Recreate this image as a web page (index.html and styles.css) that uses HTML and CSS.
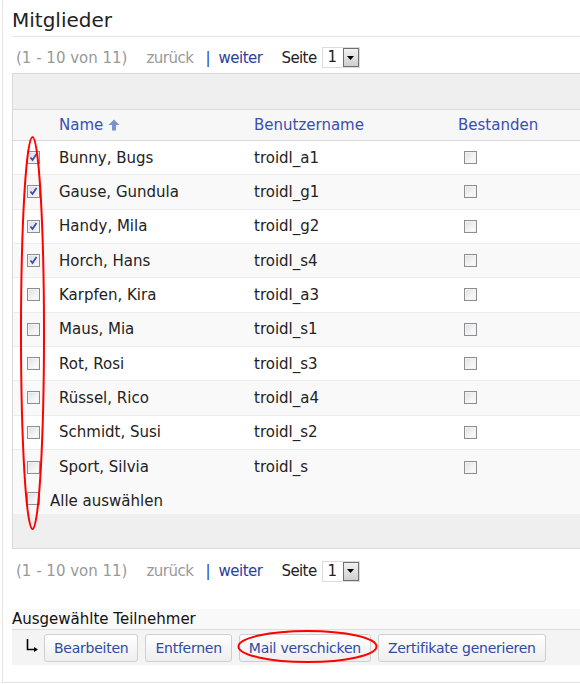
FILE: index.html
```html
<!DOCTYPE html>
<html lang="de">
<head>
<meta charset="utf-8">
<title>Mitglieder</title>
<link rel="stylesheet" href="styles.css">
</head>
<body>
<div class="panel">
  <h1 class="title">Mitglieder</h1>

  <div class="pager">
    <span class="range">(1 - 10 von 11)</span>
    <span class="prev">zurück</span>
    <span class="sep">|</span>
    <a class="next" href="#">weiter</a>
    <span class="page-label">Seite</span>
    <span class="select"><span class="select-val">1</span><span class="select-btn"><svg width="7" height="4" viewBox="0 0 7 4"><path d="M0 0h7L3.5 4z" fill="#000"/></svg></span></span>
  </div>

  <div class="grid">
    <div class="grid-top"></div>
    <div class="row head">
      <div class="c-check"></div>
      <div class="c-name">Name <svg class="sort" width="12" height="12" viewBox="0 0 12 12"><path d="M6 0.5L11.5 6H8v5.5H4V6H0.5z" fill="#7d92cc"/></svg></div>
      <div class="c-user">Benutzername</div>
      <div class="c-head-pass">Bestanden</div>
    </div>

    <div class="row"><div class="c-check"><span class="cb on"></span></div><div class="c-name">Bunny, Bugs</div><div class="c-user">troidl_a1</div><div class="c-pass"><span class="cb"></span></div></div>
    <div class="row alt"><div class="c-check"><span class="cb on"></span></div><div class="c-name">Gause, Gundula</div><div class="c-user">troidl_g1</div><div class="c-pass"><span class="cb"></span></div></div>
    <div class="row"><div class="c-check"><span class="cb on"></span></div><div class="c-name">Handy, Mila</div><div class="c-user">troidl_g2</div><div class="c-pass"><span class="cb"></span></div></div>
    <div class="row alt"><div class="c-check"><span class="cb on"></span></div><div class="c-name">Horch, Hans</div><div class="c-user">troidl_s4</div><div class="c-pass"><span class="cb"></span></div></div>
    <div class="row"><div class="c-check"><span class="cb"></span></div><div class="c-name">Karpfen, Kira</div><div class="c-user">troidl_a3</div><div class="c-pass"><span class="cb"></span></div></div>
    <div class="row alt"><div class="c-check"><span class="cb"></span></div><div class="c-name">Maus, Mia</div><div class="c-user">troidl_s1</div><div class="c-pass"><span class="cb"></span></div></div>
    <div class="row"><div class="c-check"><span class="cb"></span></div><div class="c-name">Rot, Rosi</div><div class="c-user">troidl_s3</div><div class="c-pass"><span class="cb"></span></div></div>
    <div class="row alt"><div class="c-check"><span class="cb"></span></div><div class="c-name">Rüssel, Rico</div><div class="c-user">troidl_a4</div><div class="c-pass"><span class="cb"></span></div></div>
    <div class="row"><div class="c-check"><span class="cb"></span></div><div class="c-name">Schmidt, Susi</div><div class="c-user">troidl_s2</div><div class="c-pass"><span class="cb"></span></div></div>
    <div class="row alt last"><div class="c-check"><span class="cb"></span></div><div class="c-name">Sport, Silvia</div><div class="c-user">troidl_s</div><div class="c-pass"><span class="cb"></span></div></div>

    <div class="select-all"><span class="cb"></span><span>Alle auswählen</span></div>
    <div class="grid-bottom"></div>
  </div>

  <div class="pager lower">
    <span class="range">(1 - 10 von 11)</span>
    <span class="prev">zurück</span>
    <span class="sep">|</span>
    <a class="next" href="#">weiter</a>
    <span class="page-label">Seite</span>
    <span class="select"><span class="select-val">1</span><span class="select-btn"><svg width="7" height="4" viewBox="0 0 7 4"><path d="M0 0h7L3.5 4z" fill="#000"/></svg></span></span>
  </div>

  <div class="actions-label">Ausgewählte Teilnehmer</div>
  <div class="actions">
    <svg class="turn" width="12" height="13" viewBox="0 0 12 13"><path d="M1.5 0v10.5H9" fill="none" stroke="#000" stroke-width="1.6"/><path d="M8 8l4 2.5L8 13z" fill="#000"/></svg>
    <button class="btn">Bearbeiten</button>
    <button class="btn">Entfernen</button>
    <button class="btn">Mail verschicken</button>
    <button class="btn">Zertifikate generieren</button>
  </div>

  <svg class="mark" width="580" height="684" viewBox="0 0 580 684">
    <ellipse cx="32.5" cy="333" rx="11.5" ry="196" fill="none" stroke="#f00" stroke-width="2"/>
    <ellipse cx="307.5" cy="646.5" rx="69" ry="15.5" fill="none" stroke="#f00" stroke-width="2"/>
  </svg>
</div>
</body>
</html>
```

FILE: styles.css
```css
html, body {
  margin: 0;
  padding: 0;
  background: #fff;
}

body {
  font-family: "DejaVu Sans", Verdana, sans-serif;
  font-size: 15px;
  color: #222;
}

.panel {
  position: relative;
  margin-left: 2px;
  height: 683px;
  box-sizing: border-box;
  border-left: 1px solid #e3e3e3;
  border-bottom: 1px solid #e3e3e3;
  padding-left: 9px;
  overflow: hidden;
}

.title {
  margin: 0;
  font-size: 20px;
  font-weight: normal;
  color: #222;
  line-height: 24px;
  padding-top: 8px;
  height: 28px;
  border-bottom: 1px solid #e6e6e6;
}

/* paging line above and below the list */
.pager {
  display: flex;
  align-items: center;
  height: 36px;
  box-sizing: border-box;
  padding: 5px 0 0 4px;
  white-space: nowrap;
}

.pager.lower {
  height: 44px;
  padding-top: 0;
  margin-bottom: 16px;
}

.range { color: #999; }
.prev { color: #999; margin-left: 19px; letter-spacing: -0.5px; }
.sep { color: #2a3f9e; margin-left: 12px; }
.next { color: #2a3f9e; text-decoration: none; margin-left: 8px; letter-spacing: -0.5px; }
.page-label { color: #222; margin-left: 19px; letter-spacing: -0.6px; }

.select {
  display: inline-flex;
  align-items: center;
  margin-left: 5px;
  width: 38px;
  height: 21px;
  box-sizing: border-box;
  border: 1px solid #dcdcdc;
  background: #fff;
}

.select-val {
  flex: 1;
  padding-left: 5px;
  color: #222;
  font-size: 15px;
  line-height: 19px;
}

.select-btn {
  width: 16px;
  height: 19px;
  box-sizing: border-box;
  border: 1px solid #707070;
  background: linear-gradient(#f2f2f2, #cfcfcf);
  display: flex;
  align-items: center;
  justify-content: center;
}

/* member list */
.grid {
  border: 1px solid #d9d9d9;
  border-right: none;
}

.grid-top {
  height: 35px;
  background: #efefef;
  border-bottom: 1px solid #d9d9d9;
}

.row {
  display: grid;
  grid-template-columns: 46px 195px 204px 1fr;
  align-items: center;
  height: 34.33px;
  box-sizing: border-box;
  border-bottom: 1px solid #ececec;
  background: #fff;
  white-space: nowrap;
}

.row.alt { background: #f9f9f9; }
.row.last { border-bottom: none; }

.row.head {
  height: 31px;
  background: #f7f7f7;
  border-bottom: 1px solid #d9d9d9;
  color: #3a4db4;
}

.c-check {
  display: flex;
  padding-left: 14px;
}

.c-name {
  display: flex;
  align-items: center;
}

.sort { margin-left: 5px; }

.c-pass { padding-left: 6px; display: flex; }

.cb {
  display: inline-block;
  width: 13px;
  height: 13px;
  box-sizing: border-box;
  border: 1px solid #8e8e8e;
  background: linear-gradient(135deg, #dcdee4 0%, #f4f4f6 60%, #fdfdfd 100%);
  box-shadow: inset 0 0 0 1px #f2f2f2;
  flex: none;
}

.cb.on {
  background:
    url("data:image/svg+xml,%3Csvg xmlns='http://www.w3.org/2000/svg' width='11' height='11' viewBox='0 0 11 11'%3E%3Cpath d='M2.5 5.5l2 2.5 4-6' fill='none' stroke='%233b4fb0' stroke-width='1.8'/%3E%3C/svg%3E") center / 11px 11px no-repeat,
    linear-gradient(135deg, #d6d9e2 0%, #eef0f4 60%, #fafafa 100%);
}

.select-all {
  display: flex;
  align-items: center;
  gap: 10px;
  height: 30px;
  box-sizing: border-box;
  padding: 4px 0 0 14px;
  background: #f9f9f9;
}

.select-all .cb { position: relative; top: -3px; }

.grid-bottom {
  height: 34px;
  background: #efefef;
}

/* bulk actions for the ticked members */
.actions-label {
  background: #f9f9f9;
  height: 20px;
  line-height: 21px;
  border-bottom: 1px solid #dedede;
  color: #111;
  white-space: nowrap;
}

.actions {
  display: flex;
  align-items: center;
  gap: 7px;
  height: 35px;
  background: #f4f4f4;
  padding-left: 14px;
}

.turn { margin-right: -1px; margin-top: -4px; }

.btn {
  font-family: "DejaVu Sans", Verdana, sans-serif;
  font-size: 14px;
  letter-spacing: -0.25px;
  color: #2f4aa3;
  height: 28px;
  padding: 0 9px;
  border: 1px solid #cfcfcf;
  border-radius: 3px;
  background: linear-gradient(#ffffff, #eeeeee);
  white-space: nowrap;
}

.mark {
  position: absolute;
  left: -3px;
  top: 0;
  pointer-events: none;
}
```
